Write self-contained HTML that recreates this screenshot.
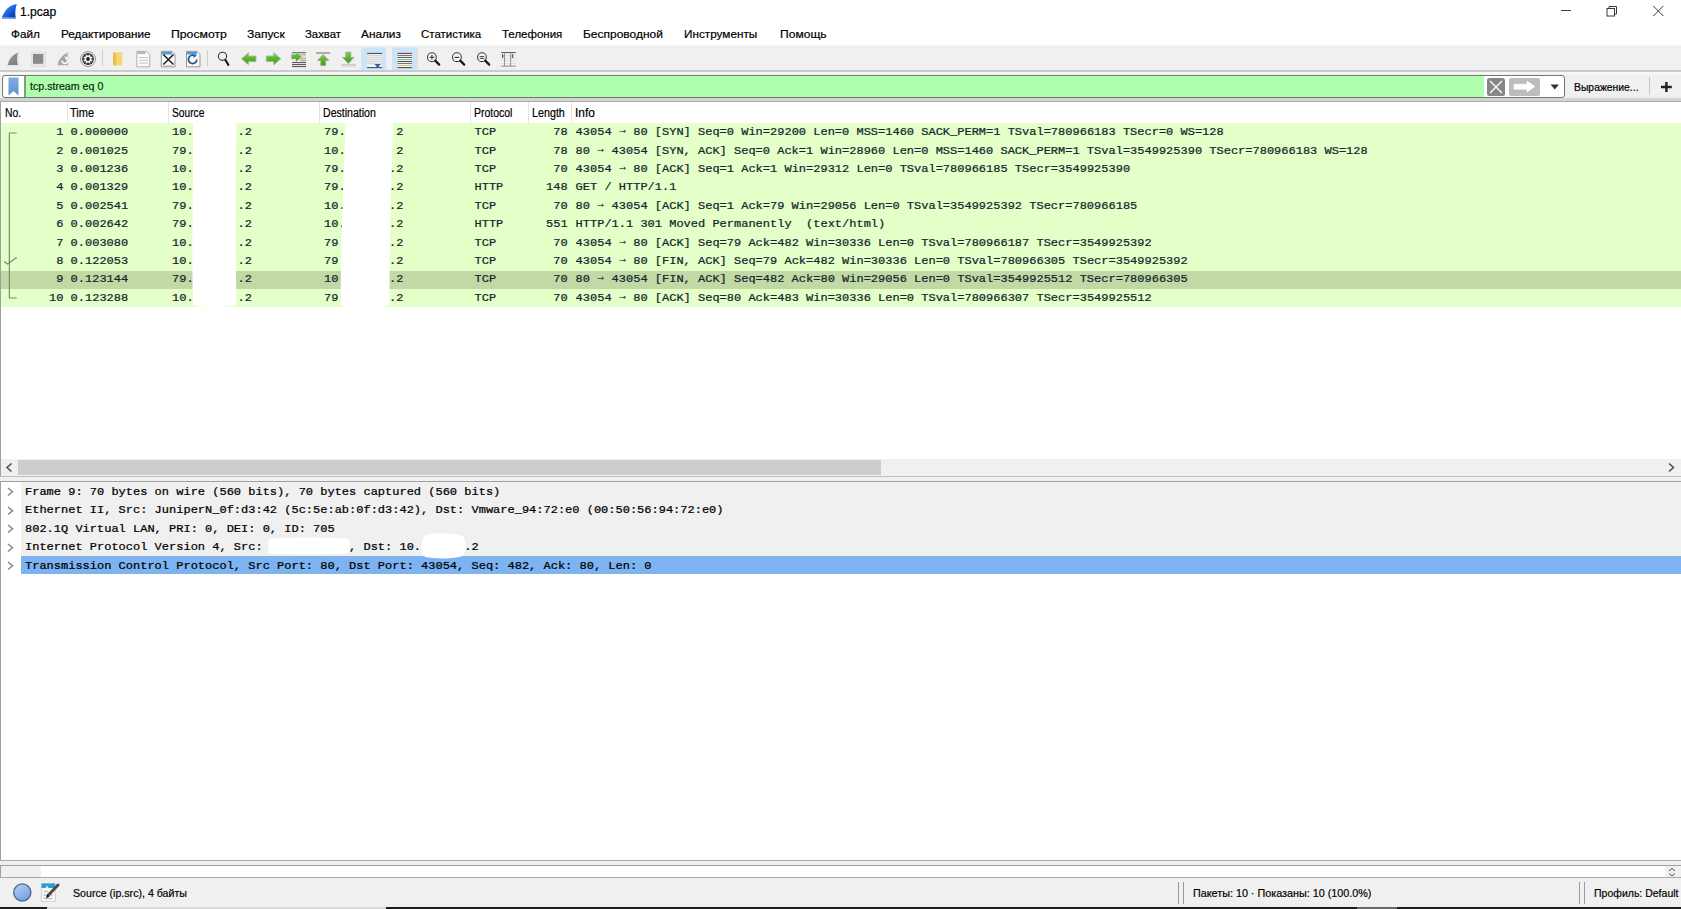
<!DOCTYPE html>
<html><head><meta charset="utf-8"><title>1.pcap</title>
<style>
*{box-sizing:border-box;margin:0;padding:0}
html,body{width:1681px;height:909px;overflow:hidden;background:#fff}
body{position:relative;font-family:"Liberation Sans",sans-serif}
.r{position:absolute;display:block}
.st{position:absolute;white-space:pre;line-height:16px;transform-origin:0 0;font-family:"Liberation Sans",sans-serif;-webkit-text-stroke:0.2px currentColor}
.ar{display:inline-block;width:7.2px;transform:translateY(-2px) scaleX(0.85)}
.mt{position:absolute;white-space:pre;line-height:14px;font-family:"Liberation Mono",monospace;font-size:12px;-webkit-text-stroke:0.25px currentColor;transform:scaleY(0.94);transform-origin:0 10.2px}
</style></head><body>
<div class="r" style="left:0px;top:0px;width:1681px;height:45px;background:#fff;"></div>
<svg class="r" style="left:0px;top:2px;" width="20" height="19" viewBox="0 0 20 19"><defs><linearGradient id="sg" x1="0.2" y1="0.2" x2="0.9" y2="0.9"><stop offset="0" stop-color="#3a8cf5"/><stop offset="0.6" stop-color="#1456d0"/><stop offset="1" stop-color="#0a3a9a"/></linearGradient></defs><path d="M1.8 16.6 C3.5 9.5 8.5 3.2 16.8 2 C15.2 6.5 14.9 12 15.8 16.6 Z" fill="url(#sg)"/><path d="M2.2 16.7 L15.8 16.7 L15.7 15.2 L3 15 Z" fill="#6aa8f7" opacity="0.85"/></svg>
<div class="r" style="left:1561px;top:10px;width:10px;height:1px;background:#444;"></div>
<svg class="r" style="left:1605px;top:4px;" width="14" height="14" viewBox="0 0 14 14"><rect x="2" y="4.5" width="7.5" height="7.5" fill="none" stroke="#3a3a3a" stroke-width="1"/><path d="M4 4.5 V2.5 H11.5 V10 H9.5" fill="none" stroke="#3a3a3a" stroke-width="1"/></svg>
<svg class="r" style="left:1652px;top:5px;" width="13" height="13" viewBox="0 0 13 13"><path d="M1.3 1 L11.3 11 M11.3 1 L1.3 11" stroke="#3a3a3a" stroke-width="1"/></svg>
<div class="r" style="left:0px;top:45px;width:1681px;height:1px;background:#f6f6f6;"></div>
<div class="r" style="left:0px;top:46px;width:1681px;height:24px;background:#f0f0f0;"></div>
<div class="r" style="left:0px;top:70px;width:1681px;height:2px;background:#cbcbcb;"></div>
<svg class="r" style="left:0;top:46px" width="530" height="24" viewBox="0 46 530 24">
<defs>
<linearGradient id="gfin" x1="0" y1="0" x2="1" y2="1"><stop offset="0" stop-color="#9a9a9a"/><stop offset="1" stop-color="#7d7d7d"/></linearGradient>
<linearGradient id="garr" x1="0" y1="0" x2="0" y2="1"><stop offset="0" stop-color="#7ccd4a"/><stop offset="1" stop-color="#3c9a12"/></linearGradient>
<linearGradient id="gfold" x1="0" y1="0" x2="1" y2="0"><stop offset="0" stop-color="#e9c54e"/><stop offset="0.35" stop-color="#f7da78"/><stop offset="1" stop-color="#f5d46a"/></linearGradient>
</defs>
<!-- start capture fin -->
<path d="M6.2 66.2 C7.5 60 12 53.5 19.8 51.5 C18.3 55.5 18.3 61 19.8 66.2 Z" fill="#e4e4e4"/>
<path d="M7.8 65 C9 59.5 12.5 54.5 17.8 53 C16.8 56.5 16.8 61 17.8 65 Z" fill="url(#gfin)"/>
<!-- stop -->
<rect x="31.3" y="52.2" width="14" height="14" fill="#e6e6e6" stroke="#dcdcdc" stroke-width="0.8"/>
<rect x="33" y="54" width="10.2" height="9.8" fill="#8a8a8a"/>
<!-- restart fin -->
<path d="M56.2 66.2 C57.5 60 62 53.5 69.8 51.5 C68.3 55.5 68.3 61 69.8 66.2 Z" fill="#e4e4e4"/>
<path d="M57.8 65 C59 59.5 62.5 54.5 67.8 53 C66.8 56.5 66.8 61 67.8 65 Z" fill="#a3a3a3"/>
<path d="M62 60.5 A2.8 2.8 0 1 0 66 58" fill="none" stroke="#f4f4f4" stroke-width="1.7"/>
<path d="M64.5 56 L67.5 57.5 L65.5 59.8 Z" fill="#f4f4f4"/>
<!-- options gear -->
<circle cx="88" cy="59" r="7.5" fill="#f3f3f3" stroke="#8a8a8a" stroke-width="0.9"/>
<circle cx="88" cy="59" r="5.9" fill="#303030"/>
<g fill="#f4f4f4"><circle cx="88" cy="59" r="3.4"/><rect x="87.3" y="54.4" width="1.4" height="2" transform="rotate(22.5 88 59)"/><rect x="87.3" y="54.4" width="1.4" height="2" transform="rotate(67.5 88 59)"/><rect x="87.3" y="54.4" width="1.4" height="2" transform="rotate(112.5 88 59)"/><rect x="87.3" y="54.4" width="1.4" height="2" transform="rotate(157.5 88 59)"/><rect x="87.3" y="54.4" width="1.4" height="2" transform="rotate(202.5 88 59)"/><rect x="87.3" y="54.4" width="1.4" height="2" transform="rotate(247.5 88 59)"/><rect x="87.3" y="54.4" width="1.4" height="2" transform="rotate(292.5 88 59)"/><rect x="87.3" y="54.4" width="1.4" height="2" transform="rotate(337.5 88 59)"/></g>
<circle cx="88" cy="59" r="1.9" fill="#222"/>
<!-- sep -->
<rect x="102" y="50.6" width="1" height="15.5" fill="#cdcdcd"/>
<!-- folder -->
<path d="M113 52.2 H121.5 L122.3 53 V65.6 H114 L113 64.5 Z" fill="url(#gfold)"/>
<path d="M113 52.2 L116.5 54 V65.6 H114 L113 64.5 Z" fill="#e2bc45" opacity="0.7"/>
<!-- doc (save) -->
<path d="M136.8 51.4 H146.5 L149.7 54.6 V66.8 H136.8 Z" fill="#fbfbfb" stroke="#a8a8a8" stroke-width="0.9"/>
<path d="M137.5 52 H145.5 V54 H137.5 Z" fill="#9a9a9a" opacity="0.7"/>
<g fill="#c4c4c4"><rect x="139" y="57" width="9" height="1"/><rect x="139" y="59.8" width="9" height="1"/><rect x="139" y="62.6" width="9" height="1"/></g>
<!-- doc X close -->
<path d="M161.3 51.4 H172 L175 54.4 V66.8 H161.3 Z" fill="#f8f8f4" stroke="#8c8c8c" stroke-width="0.9"/>
<rect x="161.8" y="51.9" width="10" height="2.6" fill="#4a9fd6"/>
<path d="M163.3 54.5 L173.5 64.5 M173.5 54.5 L163.3 64.5" stroke="#1a1a1a" stroke-width="1.5"/>
<g fill="#c8c8b8"><rect x="164" y="65" width="8" height="0.8"/></g>
<!-- doc reload -->
<path d="M186.5 51.4 H197 L200 54.4 V66.8 H186.5 Z" fill="#f8f8f4" stroke="#8c8c8c" stroke-width="0.9"/>
<rect x="187" y="51.9" width="10" height="2.6" fill="#4a9fd6"/>
<path d="M196.8 59.5 A4.2 4.2 0 1 1 194.5 55.6" fill="none" stroke="#2a4f8a" stroke-width="1.7"/>
<path d="M193 53.8 L197 55.5 L193.6 58 Z" fill="#2a6fc0"/>
<!-- sep -->
<rect x="207" y="50.6" width="1" height="15.5" fill="#cdcdcd"/>
<!-- find -->
<circle cx="222.5" cy="56.3" r="4.1" fill="none" stroke="#3a3a3a" stroke-width="1.1"/>
<path d="M225.3 59.8 L228.3 64.8" stroke="#111" stroke-width="2.1" stroke-linecap="round"/>
<!-- back arrow -->
<path d="M241.5 58.8 L248.5 52.8 V56 H256 V61.6 H248.5 V64.8 Z" fill="url(#garr)" stroke="#a8b8a0" stroke-width="0.9"/>
<!-- fwd arrow -->
<path d="M280.8 58.8 L273.8 52.8 V56 H266.3 V61.6 H273.8 V64.8 Z" fill="url(#garr)" stroke="#a8b8a0" stroke-width="0.9"/>
<!-- go to packet -->
<g fill="#5a5a5a"><rect x="292" y="52.2" width="14" height="1"/><rect x="292" y="62" width="14" height="1.1"/><rect x="292" y="64" width="14" height="1.1"/><rect x="292" y="66" width="14" height="1.1"/></g>
<g fill="#9a9a9a"><rect x="300" y="54.3" width="6" height="1"/><rect x="300" y="58.3" width="6" height="1"/><rect x="300" y="60.2" width="6" height="1"/></g>
<rect x="302" y="56.2" width="4" height="2" fill="#eee27a"/>
<path d="M291.4 54.6 H296 V51.8 L301.8 56.8 L296 61.8 V59 H291.4 Z" fill="url(#garr)" stroke="#b0c0a8" stroke-width="0.8"/>
<!-- first packet -->
<rect x="316.2" y="52.2" width="14" height="1.6" fill="#9c9c9c"/>
<path d="M323.2 54.4 L328.8 60.4 H325.6 V65.6 H320.8 V60.4 H317.6 Z" fill="url(#garr)" stroke="#a0a0a0" stroke-width="0.8"/>
<!-- last packet -->
<path d="M348.3 63.6 L354 57.4 H350.8 V52.2 H345.8 V57.4 H342.6 Z" fill="url(#garr)" stroke="#a0a0a0" stroke-width="0.8"/>
<rect x="341.6" y="64.4" width="14" height="1.6" rx="0.8" fill="#e8e8e8" stroke="#b0b0b0" stroke-width="0.6"/>
<!-- autoscroll pressed -->
<rect x="361.2" y="47.3" width="25" height="22.6" fill="#cce4f7"/>
<rect x="367.1" y="52.9" width="15" height="1.1" fill="#4a5560"/>
<g fill="#d5d0c4"><rect x="367.1" y="54.8" width="15" height="0.8"/><rect x="367.1" y="56.8" width="15" height="0.8"/><rect x="367.1" y="58.8" width="15" height="0.8"/><rect x="367.1" y="60.8" width="15" height="0.8"/><rect x="367.1" y="62.8" width="15" height="0.8"/></g>
<g fill="#f4f4f4"><rect x="367.1" y="54" width="15" height="0.8"/><rect x="367.1" y="56" width="15" height="0.8"/><rect x="367.1" y="58" width="15" height="0.8"/><rect x="367.1" y="60" width="15" height="0.8"/><rect x="367.1" y="62" width="15" height="0.8"/><rect x="367.1" y="64.6" width="15" height="2.2"/></g>
<rect x="367.1" y="67" width="15" height="1.1" fill="#4a5560"/>
<path d="M374.5 64 H380.8 L378.8 66.2 V67.5 H376.5 V66.2 Z" fill="#2f5f9f"/>
<!-- colorize pressed -->
<rect x="392" y="47.3" width="24.7" height="22.6" fill="#cce4f7"/>
<g>
<rect x="397.5" y="53.3" width="14.5" height="2" fill="#fafafa"/>
<rect x="397.5" y="55.3" width="14.5" height="12" fill="#fafafa"/>
<rect x="397.5" y="52.9" width="14.5" height="1.1" fill="#4a5560"/>
<rect x="397.5" y="54.9" width="14.5" height="1.1" fill="#b06060"/>
<rect x="397.5" y="56.9" width="14.5" height="1.1" fill="#56637a"/>
<rect x="397.5" y="58.9" width="14.5" height="1.1" fill="#8cc87a"/>
<rect x="397.5" y="60.9" width="14.5" height="1.1" fill="#4a5560"/>
<rect x="397.5" y="62.9" width="14.5" height="1.1" fill="#8a6a6a"/>
<rect x="397.5" y="64.9" width="14.5" height="1.1" fill="#e0c070"/>
<rect x="397.5" y="67" width="14.5" height="1.1" fill="#4a5560"/>
</g>
<rect x="417" y="48" width="1" height="21" fill="#dcdcdc"/>
<!-- zoom in -->
<circle cx="431.9" cy="57.2" r="4.4" fill="#f6f6f6" stroke="#3a3a3a" stroke-width="1.05"/>
<path d="M435.2 60.6 L439.2 64.6" stroke="#1a1a1a" stroke-width="2.2" stroke-linecap="round"/>
<path d="M429.5 57.2 H434.3 M431.9 54.8 V59.6" stroke="#333" stroke-width="1.1"/>
<!-- zoom out -->
<circle cx="456.9" cy="57.2" r="4.4" fill="#f6f6f6" stroke="#3a3a3a" stroke-width="1.05"/>
<path d="M460.2 60.6 L464.2 64.6" stroke="#1a1a1a" stroke-width="2.2" stroke-linecap="round"/>
<path d="M454.5 57.4 H459.3" stroke="#333" stroke-width="1.1"/>
<!-- zoom 100 -->
<circle cx="481.9" cy="57.2" r="4.4" fill="#f6f6f6" stroke="#3a3a3a" stroke-width="1.05"/>
<path d="M485.2 60.6 L489.2 64.6" stroke="#1a1a1a" stroke-width="2.2" stroke-linecap="round"/>
<path d="M479.6 56.6 H484.2 M479.6 58.4 H484.2" stroke="#333" stroke-width="0.9"/>
<!-- resize columns -->
<rect x="501.2" y="52.5" width="14.6" height="13.8" fill="#f4f4f0"/>
<g fill="#d8d8d0"><rect x="501.2" y="55.5" width="14.6" height="0.7"/><rect x="501.2" y="58" width="14.6" height="0.7"/><rect x="501.2" y="60.5" width="14.6" height="0.7"/><rect x="501.2" y="63" width="14.6" height="0.7"/></g>
<rect x="501.2" y="52" width="14.6" height="1.1" fill="#606060"/>
<rect x="501.2" y="65.6" width="14.6" height="1" fill="#8a8a8a"/>
<rect x="504" y="52.5" width="0.9" height="13.5" fill="#8a8a8a"/>
<rect x="510.2" y="52.5" width="0.9" height="13.5" fill="#8a8a8a"/>
<path d="M502 53.6 Q505.2 56 502 58.6 Z" fill="#2f5f9f"/>
<path d="M513.2 53.6 Q510 56 513.2 58.6 Z" fill="#2f5f9f"/>
</svg>

<div class="r" style="left:0px;top:72px;width:1681px;height:27px;background:#f0f0f0;"></div>
<div class="r" style="left:0px;top:72px;width:1681px;height:2px;background:#f7f7f7;"></div>
<div class="r" style="left:0px;top:98px;width:1681px;height:3px;background:#d3d3d3;"></div>
<div class="r" style="left:0px;top:101px;width:1681px;height:1px;background:#ababae;"></div>
<div class="r" style="left:2px;top:75px;width:1563px;height:23px;border:1px solid #6d7d6d;border-radius:3px;background:#fff"></div>
<div class="r" style="left:25px;top:76px;width:1459px;height:21px;background:#afffaf;"></div>
<div class="r" style="left:24px;top:76px;width:1.5px;height:21px;background:#7f9f7f;"></div>
<svg class="r" style="left:8px;top:77px;" width="11" height="19" viewBox="0 0 11 19"><defs><linearGradient id="bm" x1="0" y1="0" x2="0" y2="1"><stop offset="0" stop-color="#7faee0"/><stop offset="1" stop-color="#5b8fd6"/></linearGradient></defs><path d="M0.5 0.5 H10.5 V18.5 L5.5 14 L0.5 18.5 Z" fill="url(#bm)"/></svg>
<div class="r" style="left:1487px;top:78px;width:18px;height:18px;background:#868686;border-radius:2.5px"></div>
<svg class="r" style="left:1487px;top:78px;" width="18" height="18" viewBox="0 0 18 18"><path d="M3 3 L15 15 M15 3 L3 15" stroke="#fff" stroke-width="1.4"/></svg>
<div class="r" style="left:1509px;top:78px;width:31px;height:18px;background:#bdbdbd;border-radius:2px"></div>
<svg class="r" style="left:1509px;top:78px;" width="31" height="18" viewBox="0 0 31 18"><path d="M5 6.2 H18 V3.1 L26 8.6 L18 14.1 V11.2 H5 Z" fill="#fff" stroke="#fff" stroke-width="0.6" stroke-linejoin="round"/></svg>
<svg class="r" style="left:1550px;top:84px;" width="10" height="6" viewBox="0 0 10 6"><path d="M0.5 0.5 H9 L4.75 5.5 Z" fill="#333"/></svg>
<div class="r" style="left:1649px;top:77px;width:1px;height:18px;background:#c8c8c8;"></div>
<svg class="r" style="left:1659px;top:80px;" width="15" height="14" viewBox="0 0 15 14"><path d="M7.4 2 V12 M2 7 H12.8" stroke="#222" stroke-width="2.5"/></svg>
<div class="r" style="left:0px;top:102px;width:1681px;height:374px;background:#fff;"></div>
<div class="r" style="left:0px;top:102px;width:1px;height:374px;background:#a0a0a0;"></div>
<div class="r" style="left:67px;top:102px;width:1px;height:21.5px;background:#e3e3e3;"></div>
<div class="r" style="left:168px;top:102px;width:1px;height:21.5px;background:#e3e3e3;"></div>
<div class="r" style="left:319px;top:102px;width:1px;height:21.5px;background:#e3e3e3;"></div>
<div class="r" style="left:470px;top:102px;width:1px;height:21.5px;background:#e3e3e3;"></div>
<div class="r" style="left:528px;top:102px;width:1px;height:21.5px;background:#e3e3e3;"></div>
<div class="r" style="left:571px;top:102px;width:1px;height:21.5px;background:#e3e3e3;"></div>
<div class="r" style="left:1px;top:123.40px;width:1680px;height:18.39px;background:#e4ffc7"></div>
<div class="r" style="left:1px;top:141.79px;width:1680px;height:18.39px;background:#e4ffc7"></div>
<div class="r" style="left:1px;top:160.18px;width:1680px;height:18.39px;background:#e4ffc7"></div>
<div class="r" style="left:1px;top:178.57px;width:1680px;height:18.39px;background:#e4ffc7"></div>
<div class="r" style="left:1px;top:196.96px;width:1680px;height:18.39px;background:#e4ffc7"></div>
<div class="r" style="left:1px;top:215.35px;width:1680px;height:18.39px;background:#e4ffc7"></div>
<div class="r" style="left:1px;top:233.74px;width:1680px;height:18.39px;background:#e4ffc7"></div>
<div class="r" style="left:1px;top:252.13px;width:1680px;height:18.39px;background:#e4ffc7"></div>
<div class="r" style="left:1px;top:270.52px;width:1680px;height:18.39px;background:#c2d9a6"></div>
<div class="r" style="left:1px;top:288.91px;width:1680px;height:18.39px;background:#e4ffc7"></div>
<div class="mt" style="right:1617.6px;top:125.31px;color:#12272e;">1</div>
<div class="mt" style="left:70.6px;top:125.31px;color:#12272e;">0.000000</div>
<div class="mt" style="left:172px;top:125.31px;color:#12272e;">10.</div>
<div class="mt" style="left:237.5px;top:125.31px;color:#12272e;">.2</div>
<div class="mt" style="left:324px;top:125.31px;color:#12272e;">79.</div>
<div class="mt" style="left:396.2px;top:125.31px;color:#12272e;">2</div>
<div class="mt" style="left:474.5px;top:125.31px;color:#12272e;">TCP</div>
<div class="mt" style="right:1113.4px;top:125.31px;color:#12272e;">78</div>
<div class="mt" style="left:575.6px;top:125.31px;color:#12272e;">43054 <span class="ar">→</span> 80 [SYN] Seq=0 Win=29200 Len=0 MSS=1460 SACK_PERM=1 TSval=780966183 TSecr=0 WS=128</div>
<div class="mt" style="right:1617.6px;top:143.70px;color:#12272e;">2</div>
<div class="mt" style="left:70.6px;top:143.70px;color:#12272e;">0.001025</div>
<div class="mt" style="left:172px;top:143.70px;color:#12272e;">79.</div>
<div class="mt" style="left:237.5px;top:143.70px;color:#12272e;">.2</div>
<div class="mt" style="left:324px;top:143.70px;color:#12272e;">10.</div>
<div class="mt" style="left:396.2px;top:143.70px;color:#12272e;">2</div>
<div class="mt" style="left:474.5px;top:143.70px;color:#12272e;">TCP</div>
<div class="mt" style="right:1113.4px;top:143.70px;color:#12272e;">78</div>
<div class="mt" style="left:575.6px;top:143.70px;color:#12272e;">80 <span class="ar">→</span> 43054 [SYN, ACK] Seq=0 Ack=1 Win=28960 Len=0 MSS=1460 SACK_PERM=1 TSval=3549925390 TSecr=780966183 WS=128</div>
<div class="mt" style="right:1617.6px;top:162.09px;color:#12272e;">3</div>
<div class="mt" style="left:70.6px;top:162.09px;color:#12272e;">0.001236</div>
<div class="mt" style="left:172px;top:162.09px;color:#12272e;">10.</div>
<div class="mt" style="left:237.5px;top:162.09px;color:#12272e;">.2</div>
<div class="mt" style="left:324px;top:162.09px;color:#12272e;">79.</div>
<div class="mt" style="left:389px;top:162.09px;color:#12272e;">.2</div>
<div class="mt" style="left:474.5px;top:162.09px;color:#12272e;">TCP</div>
<div class="mt" style="right:1113.4px;top:162.09px;color:#12272e;">70</div>
<div class="mt" style="left:575.6px;top:162.09px;color:#12272e;">43054 <span class="ar">→</span> 80 [ACK] Seq=1 Ack=1 Win=29312 Len=0 TSval=780966185 TSecr=3549925390</div>
<div class="mt" style="right:1617.6px;top:180.48px;color:#12272e;">4</div>
<div class="mt" style="left:70.6px;top:180.48px;color:#12272e;">0.001329</div>
<div class="mt" style="left:172px;top:180.48px;color:#12272e;">10.</div>
<div class="mt" style="left:237.5px;top:180.48px;color:#12272e;">.2</div>
<div class="mt" style="left:324px;top:180.48px;color:#12272e;">79.</div>
<div class="mt" style="left:389px;top:180.48px;color:#12272e;">.2</div>
<div class="mt" style="left:474.5px;top:180.48px;color:#12272e;">HTTP</div>
<div class="mt" style="right:1113.4px;top:180.48px;color:#12272e;">148</div>
<div class="mt" style="left:575.6px;top:180.48px;color:#12272e;">GET / HTTP/1.1</div>
<div class="mt" style="right:1617.6px;top:198.87px;color:#12272e;">5</div>
<div class="mt" style="left:70.6px;top:198.87px;color:#12272e;">0.002541</div>
<div class="mt" style="left:172px;top:198.87px;color:#12272e;">79.</div>
<div class="mt" style="left:237.5px;top:198.87px;color:#12272e;">.2</div>
<div class="mt" style="left:324px;top:198.87px;color:#12272e;">10.</div>
<div class="mt" style="left:389px;top:198.87px;color:#12272e;">.2</div>
<div class="mt" style="left:474.5px;top:198.87px;color:#12272e;">TCP</div>
<div class="mt" style="right:1113.4px;top:198.87px;color:#12272e;">70</div>
<div class="mt" style="left:575.6px;top:198.87px;color:#12272e;">80 <span class="ar">→</span> 43054 [ACK] Seq=1 Ack=79 Win=29056 Len=0 TSval=3549925392 TSecr=780966185</div>
<div class="mt" style="right:1617.6px;top:217.26px;color:#12272e;">6</div>
<div class="mt" style="left:70.6px;top:217.26px;color:#12272e;">0.002642</div>
<div class="mt" style="left:172px;top:217.26px;color:#12272e;">79.</div>
<div class="mt" style="left:237.5px;top:217.26px;color:#12272e;">.2</div>
<div class="mt" style="left:324px;top:217.26px;color:#12272e;">10.</div>
<div class="mt" style="left:389px;top:217.26px;color:#12272e;">.2</div>
<div class="mt" style="left:474.5px;top:217.26px;color:#12272e;">HTTP</div>
<div class="mt" style="right:1113.4px;top:217.26px;color:#12272e;">551</div>
<div class="mt" style="left:575.6px;top:217.26px;color:#12272e;">HTTP/1.1 301 Moved Permanently  (text/html)</div>
<div class="mt" style="right:1617.6px;top:235.65px;color:#12272e;">7</div>
<div class="mt" style="left:70.6px;top:235.65px;color:#12272e;">0.003080</div>
<div class="mt" style="left:172px;top:235.65px;color:#12272e;">10.</div>
<div class="mt" style="left:237.5px;top:235.65px;color:#12272e;">.2</div>
<div class="mt" style="left:324px;top:235.65px;color:#12272e;">79</div>
<div class="mt" style="left:389px;top:235.65px;color:#12272e;">.2</div>
<div class="mt" style="left:474.5px;top:235.65px;color:#12272e;">TCP</div>
<div class="mt" style="right:1113.4px;top:235.65px;color:#12272e;">70</div>
<div class="mt" style="left:575.6px;top:235.65px;color:#12272e;">43054 <span class="ar">→</span> 80 [ACK] Seq=79 Ack=482 Win=30336 Len=0 TSval=780966187 TSecr=3549925392</div>
<div class="mt" style="right:1617.6px;top:254.04px;color:#12272e;">8</div>
<div class="mt" style="left:70.6px;top:254.04px;color:#12272e;">0.122053</div>
<div class="mt" style="left:172px;top:254.04px;color:#12272e;">10.</div>
<div class="mt" style="left:237.5px;top:254.04px;color:#12272e;">.2</div>
<div class="mt" style="left:324px;top:254.04px;color:#12272e;">79</div>
<div class="mt" style="left:389px;top:254.04px;color:#12272e;">.2</div>
<div class="mt" style="left:474.5px;top:254.04px;color:#12272e;">TCP</div>
<div class="mt" style="right:1113.4px;top:254.04px;color:#12272e;">70</div>
<div class="mt" style="left:575.6px;top:254.04px;color:#12272e;">43054 <span class="ar">→</span> 80 [FIN, ACK] Seq=79 Ack=482 Win=30336 Len=0 TSval=780966305 TSecr=3549925392</div>
<div class="mt" style="right:1617.6px;top:272.43px;color:#12272e;">9</div>
<div class="mt" style="left:70.6px;top:272.43px;color:#12272e;">0.123144</div>
<div class="mt" style="left:172px;top:272.43px;color:#12272e;">79.</div>
<div class="mt" style="left:237.5px;top:272.43px;color:#12272e;">.2</div>
<div class="mt" style="left:324px;top:272.43px;color:#12272e;">10</div>
<div class="mt" style="left:389px;top:272.43px;color:#12272e;">.2</div>
<div class="mt" style="left:474.5px;top:272.43px;color:#12272e;">TCP</div>
<div class="mt" style="right:1113.4px;top:272.43px;color:#12272e;">70</div>
<div class="mt" style="left:575.6px;top:272.43px;color:#12272e;">80 <span class="ar">→</span> 43054 [FIN, ACK] Seq=482 Ack=80 Win=29056 Len=0 TSval=3549925512 TSecr=780966305</div>
<div class="mt" style="right:1617.6px;top:290.82px;color:#12272e;">10</div>
<div class="mt" style="left:70.6px;top:290.82px;color:#12272e;">0.123288</div>
<div class="mt" style="left:172px;top:290.82px;color:#12272e;">10.</div>
<div class="mt" style="left:237.5px;top:290.82px;color:#12272e;">.2</div>
<div class="mt" style="left:324px;top:290.82px;color:#12272e;">79</div>
<div class="mt" style="left:389px;top:290.82px;color:#12272e;">.2</div>
<div class="mt" style="left:474.5px;top:290.82px;color:#12272e;">TCP</div>
<div class="mt" style="right:1113.4px;top:290.82px;color:#12272e;">70</div>
<div class="mt" style="left:575.6px;top:290.82px;color:#12272e;">43054 <span class="ar">→</span> 80 [ACK] Seq=80 Ack=483 Win=30336 Len=0 TSval=780966307 TSecr=3549925512</div>
<svg class="r" style="left:186px;top:121px;" width="56" height="190" viewBox="0 0 56 190"><path d="M7 2.5 C17 1.5 40 1.5 50.5 2.5 C49.5 40 49 120 50.5 183 C40 187 17 187 7 184 C5.5 130 7.5 60 7 2.5 Z" fill="#fff"/></svg>
<svg class="r" style="left:336px;top:121px;" width="62" height="190" viewBox="0 0 62 190"><path d="M9.5 2.5 C22 1.5 46 1.5 57 2.5 C55 60 53.5 130 53.5 184 C42 188 17 188 5 185 C4 130 8 60 9.5 2.5 Z" fill="#fff"/></svg>
<svg class="r" style="left:3px;top:130px;" width="16" height="172" viewBox="0 0 16 172"><path d="M13.7 3 H6.4 V168 H13.7" fill="none" stroke="#7c8a7c" stroke-width="1.2"/><path d="M1.2 131.5 L4.5 134 L13.7 127.5" fill="none" stroke="#7c8a7c" stroke-width="1.2"/></svg>
<div class="r" style="left:1px;top:459px;width:1680px;height:17px;background:#f0f0f0;"></div>
<div class="r" style="left:18px;top:460px;width:862.5px;height:15px;background:#cdcdcd;"></div>
<svg class="r" style="left:4px;top:462px;" width="10" height="11" viewBox="0 0 10 11"><path d="M7.5 1.5 L3 5.5 L7.5 9.5" fill="none" stroke="#505050" stroke-width="1.6"/></svg>
<svg class="r" style="left:1666px;top:462px;" width="10" height="11" viewBox="0 0 10 11"><path d="M3 1.5 L7.5 5.5 L3 9.5" fill="none" stroke="#505050" stroke-width="1.6"/></svg>
<div class="r" style="left:0px;top:476px;width:1681px;height:1px;background:#bdbdbd;"></div>
<div class="r" style="left:0px;top:477px;width:1681px;height:4px;background:#f0f0f0;"></div>
<div class="r" style="left:0px;top:481px;width:1681px;height:1px;background:#a0a0a0;"></div>
<div class="r" style="left:0px;top:482px;width:1681px;height:378px;background:#fff;"></div>
<div class="r" style="left:0px;top:482px;width:1px;height:378px;background:#a0a0a0;"></div>
<div class="r" style="left:21px;top:482px;width:1660px;height:73.6px;background:#f0f0f0;"></div>
<div class="r" style="left:21px;top:555.6px;width:1660px;height:18.4px;background:#7db3f0;"></div>
<div class="mt" style="left:25px;top:484.91px;color:#000;">Frame 9: 70 bytes on wire (560 bits), 70 bytes captured (560 bits)</div>
<svg class="r" style="left:6px;top:487.4px;" width="9" height="10" viewBox="0 0 9 10"><path d="M2 1 L6.5 4.75 L2 8.5" fill="none" stroke="#8a8a8a" stroke-width="1.6"/></svg>
<div class="mt" style="left:25px;top:503.31px;color:#000;">Ethernet II, Src: JuniperN_0f:d3:42 (5c:5e:ab:0f:d3:42), Dst: Vmware_94:72:e0 (00:50:56:94:72:e0)</div>
<svg class="r" style="left:6px;top:505.79999999999995px;" width="9" height="10" viewBox="0 0 9 10"><path d="M2 1 L6.5 4.75 L2 8.5" fill="none" stroke="#8a8a8a" stroke-width="1.6"/></svg>
<div class="mt" style="left:25px;top:521.71px;color:#000;">802.1Q Virtual LAN, PRI: 0, DEI: 0, ID: 705</div>
<svg class="r" style="left:6px;top:524.1999999999999px;" width="9" height="10" viewBox="0 0 9 10"><path d="M2 1 L6.5 4.75 L2 8.5" fill="none" stroke="#8a8a8a" stroke-width="1.6"/></svg>
<div class="mt" style="left:25px;top:540.11px;color:#000;">Internet Protocol Version 4, Src:            , Dst: 10.      .2</div>
<svg class="r" style="left:6px;top:542.6px;" width="9" height="10" viewBox="0 0 9 10"><path d="M2 1 L6.5 4.75 L2 8.5" fill="none" stroke="#8a8a8a" stroke-width="1.6"/></svg>
<div class="mt" style="left:25px;top:558.51px;color:#000;">Transmission Control Protocol, Src Port: 80, Dst Port: 43054, Seq: 482, Ack: 80, Len: 0</div>
<svg class="r" style="left:6px;top:561.0px;" width="9" height="10" viewBox="0 0 9 10"><path d="M2 1 L6.5 4.75 L2 8.5" fill="none" stroke="#8a8a8a" stroke-width="1.6"/></svg>
<svg class="r" style="left:266px;top:537px;" width="86" height="18" viewBox="0 0 86 18"><path d="M3 2 C25 0 60 0 83 2 C84 8 84 12 83 16 C60 18 25 18 3 16 C2 12 2 8 3 2Z" fill="#fff"/></svg>
<svg class="r" style="left:419px;top:533px;" width="49" height="26" viewBox="0 0 49 26"><path d="M6 2 C18 0 35 0 44 3 C48 10 48 17 44 23 C35 26 18 26 6 24 C1 18 1 9 6 2Z" fill="#fff"/></svg>
<div class="r" style="left:0px;top:860px;width:1681px;height:1px;background:#a8a8a8;"></div>
<div class="r" style="left:0px;top:861px;width:1681px;height:4px;background:#f0f0f0;"></div>
<div class="r" style="left:0px;top:865px;width:1681px;height:1px;background:#a0a0a0;"></div>
<div class="r" style="left:0px;top:866px;width:1681px;height:11px;background:#fff;"></div>
<div class="r" style="left:0px;top:866px;width:1px;height:11px;background:#a0a0a0;"></div>
<div class="r" style="left:1px;top:866px;width:40px;height:11px;background:#f0f0f0;"></div>
<div class="r" style="left:1665px;top:866px;width:16px;height:11px;background:#f0f0f0;"></div>
<svg class="r" style="left:1667px;top:867px;" width="10" height="10" viewBox="0 0 10 10"><path d="M2 4 L5 1.5 L8 4 M2 6.5 L5 9 L8 6.5" fill="none" stroke="#555" stroke-width="1"/></svg>
<div class="r" style="left:0px;top:877px;width:1681px;height:1px;background:#a8a8a8;"></div>
<div class="r" style="left:0px;top:878px;width:1681px;height:29px;background:#f0f0f0;"></div>
<svg class="r" style="left:12px;top:882px;" width="21" height="21" viewBox="0 0 21 21"><defs><linearGradient id="cg" x1="0.2" y1="0" x2="0.8" y2="1"><stop offset="0" stop-color="#b0cdf2"/><stop offset="1" stop-color="#6e9fe2"/></linearGradient></defs><circle cx="10.3" cy="10.5" r="8.6" fill="url(#cg)" stroke="#4c6384" stroke-width="1.3"/></svg>
<svg class="r" style="left:40px;top:882px;" width="20" height="21" viewBox="0 0 20 21"><rect x="1.3" y="1.5" width="14" height="18" fill="#f7f7f4" stroke="#cfcfc8" stroke-width="0.9"/><rect x="1.5" y="1.5" width="13.5" height="4.5" fill="#2e9ad4"/><path d="M5.5 6 L7 3.5 L8.5 6 Z" fill="#e8f4fa"/><path d="M3.5 9.5 H8 M3.5 13 H6 M10 13 H12.5 M3.5 16.5 H12.5" stroke="#c4c4bc" stroke-width="1.3"/><path d="M18 3 L8 13.5" stroke="#4a4a4a" stroke-width="3" stroke-linecap="round"/><path d="M6 16.5 L7.2 12.5 L9.5 14.5 Z" fill="#111"/></svg>
<div class="r" style="left:1178px;top:882px;width:1px;height:22px;background:#9a9a9a;"></div>
<div class="r" style="left:1183px;top:882px;width:1px;height:22px;background:#9a9a9a;"></div>
<div class="r" style="left:1579px;top:882px;width:1px;height:22px;background:#9a9a9a;"></div>
<div class="r" style="left:1584px;top:882px;width:1px;height:22px;background:#9a9a9a;"></div>
<div class="r" style="left:0px;top:907px;width:1681px;height:2px;background:#1c1c1c;"></div>
<div class="r" style="left:47px;top:907px;width:339px;height:2px;background:#d8d8d8;"></div>
<div class="r" style="left:1357px;top:907px;width:40px;height:2px;background:#6a6a6a;"></div>
<div class="st" style="left:20.27px;top:3.94px;font-size:12.3px;color:#000;transform:scaleX(0.9825);">1.pcap</div>
<div class="st" style="left:10.54px;top:25.73px;font-size:11.6px;color:#000;transform:scaleX(1.0132);">Файл</div>
<div class="st" style="left:60.54px;top:25.73px;font-size:11.6px;color:#000;transform:scaleX(1.0149);">Редактирование</div>
<div class="st" style="left:170.52px;top:25.73px;font-size:11.6px;color:#000;transform:scaleX(1.0555);">Просмотр</div>
<div class="st" style="left:246.78px;top:25.73px;font-size:11.6px;color:#000;transform:scaleX(1.0380);">Запуск</div>
<div class="st" style="left:304.82px;top:25.73px;font-size:11.6px;color:#000;transform:scaleX(0.9758);">Захват</div>
<div class="st" style="left:361.29px;top:25.73px;font-size:11.6px;color:#000;transform:scaleX(1.0192);">Анализ</div>
<div class="st" style="left:421.21px;top:25.73px;font-size:11.6px;color:#000;transform:scaleX(0.9885);">Статистика</div>
<div class="st" style="left:501.91px;top:25.73px;font-size:11.6px;color:#000;transform:scaleX(0.9907);">Телефония</div>
<div class="st" style="left:583.48px;top:25.73px;font-size:11.6px;color:#000;transform:scaleX(1.0329);">Беспроводной</div>
<div class="st" style="left:684.49px;top:25.73px;font-size:11.6px;color:#000;transform:scaleX(1.0138);">Инструменты</div>
<div class="st" style="left:779.68px;top:25.73px;font-size:11.6px;color:#000;transform:scaleX(1.0404);">Помощь</div>
<div class="st" style="left:29.96px;top:78.49px;font-size:11px;color:#0b2a0b;transform:scaleX(0.9669);">tcp.stream eq 0</div>
<div class="st" style="left:1574.18px;top:78.89px;font-size:11px;color:#000;transform:scaleX(0.9423);">Выражение...</div>
<div class="st" style="left:5.08px;top:104.84px;font-size:12px;color:#000;transform:scaleX(0.8637);">No.</div>
<div class="st" style="left:70.34px;top:104.84px;font-size:12px;color:#000;transform:scaleX(0.9164);">Time</div>
<div class="st" style="left:171.99px;top:104.84px;font-size:12px;color:#000;transform:scaleX(0.8530);">Source</div>
<div class="st" style="left:322.97px;top:104.84px;font-size:12px;color:#000;transform:scaleX(0.8800);">Destination</div>
<div class="st" style="left:473.97px;top:104.84px;font-size:12px;color:#000;transform:scaleX(0.8730);">Protocol</div>
<div class="st" style="left:531.86px;top:104.84px;font-size:12px;color:#000;transform:scaleX(0.8947);">Length</div>
<div class="st" style="left:575.19px;top:104.84px;font-size:12px;color:#000;transform:scaleX(0.9912);">Info</div>
<div class="st" style="left:73.11px;top:885.11px;font-size:11.5px;color:#000;transform:scaleX(0.9226);">Source (ip.src), 4 байты</div>
<div class="st" style="left:1193.25px;top:884.81px;font-size:11.5px;color:#000;transform:scaleX(0.9373);">Пакеты: 10 · Показаны: 10 (100.0%)</div>
<div class="st" style="left:1594.27px;top:885.01px;font-size:11.5px;color:#000;transform:scaleX(0.9135);">Профиль: Default</div>
</body></html>
